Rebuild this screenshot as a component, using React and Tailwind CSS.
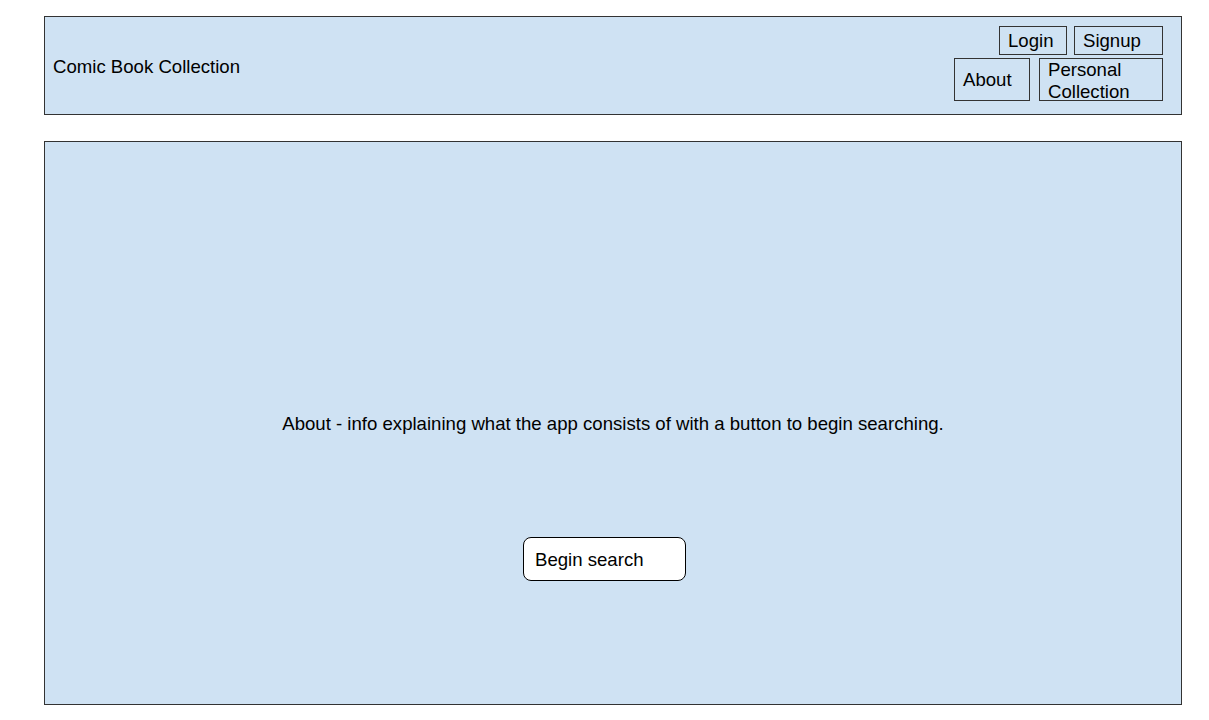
// wireframe: comic book collection landing
const box = "border border-[#333333] bg-[#cfe2f3]";

function NavButton({ label, className }) {
  return (
    <div className={`border border-[#333333] bg-[#cfe2f3] pl-2 text-[18.6px] leading-[22px] text-black ${className}`}>
      {label}
    </div>
  );
}

export default function App() {
  return (
    <div className="min-h-[720px] bg-white pt-4 font-['Liberation_Sans',Arial,sans-serif] text-black">
      {/* header */}
      <header className={`${box} ml-[44px] flex h-[99px] w-[1138px] justify-between pl-2 pr-[18px]`}>
        <h1 className="mt-[2px] self-center text-[18.6px] leading-[22px]">Comic Book Collection</h1>
        <div className="mt-[9px] flex flex-col items-end gap-[3px]">
          <div className="flex gap-[7px]">
            <NavButton label="Login" className="flex h-[29px] w-[68px] items-center" />
            <NavButton label="Signup" className="flex h-[29px] w-[89px] items-center" />
          </div>
          <div className="flex gap-[9px]">
            <NavButton label="About" className="flex h-[43px] w-[76px] items-center" />
            <NavButton label={<>Personal<br />Collection</>} className="h-[43px] w-[124px]" />
          </div>
        </div>
      </header>

      {/* main */}
      <main className={`${box} ml-[44px] mt-[26px] flex h-[564px] w-[1138px] flex-col pt-[271px]`}>
        <p className="text-center text-[18.6px] leading-[22px]">
          About - info explaining what the app consists of with a button to begin searching.
        </p>
        <button className="ml-[478px] mt-[102px] flex h-[44px] w-[163px] items-center rounded-lg border border-black bg-white pl-[11px] pt-[2px] text-left text-[18.6px]">
          Begin search
        </button>
      </main>
    </div>
  );
}
